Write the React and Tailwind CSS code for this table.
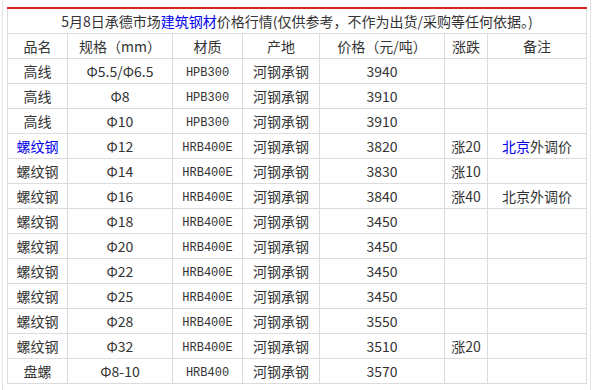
import React from "react"

const head = ['品名', '规格（mm）', '材质', '产地', '价格（元/吨）', '涨跌', '备注']

const rows = [
  ['高线', 'Φ5.5/Φ6.5', 'HPB300', '河钢承钢', '3940', '', ''],
  ['高线', 'Φ8', 'HPB300', '河钢承钢', '3910', '', ''],
  ['高线', 'Φ10', 'HPB300', '河钢承钢', '3910', '', ''],
  ['螺纹钢', 'Φ12', 'HRB400E', '河钢承钢', '3820', '涨20', '北京外调价', true],
  ['螺纹钢', 'Φ14', 'HRB400E', '河钢承钢', '3830', '涨10', ''],
  ['螺纹钢', 'Φ16', 'HRB400E', '河钢承钢', '3840', '涨40', '北京外调价'],
  ['螺纹钢', 'Φ18', 'HRB400E', '河钢承钢', '3450', '', ''],
  ['螺纹钢', 'Φ20', 'HRB400E', '河钢承钢', '3450', '', ''],
  ['螺纹钢', 'Φ22', 'HRB400E', '河钢承钢', '3450', '', ''],
  ['螺纹钢', 'Φ25', 'HRB400E', '河钢承钢', '3450', '', ''],
  ['螺纹钢', 'Φ28', 'HRB400E', '河钢承钢', '3550', '', ''],
  ['螺纹钢', 'Φ32', 'HRB400E', '河钢承钢', '3510', '涨20', ''],
  ['盘螺', 'Φ8-10', 'HRB400', '河钢承钢', '3570', '', ''],
]

function Cell({ children, first }) {
  return (
    <div className={`h-[25px] flex items-center justify-center border-b border-r border-[#dcdcdc] whitespace-nowrap ${first ? 'border-l' : ''}`}>
      {children}
    </div>
  )
}

export default function App() {
  return (
    <div className="ml-[2px] w-[589px] h-[390px] border-l border-r border-[#e3e3e3] bg-white pl-[4px] pt-[7px] text-[14px] text-[#333]"
      style={{ fontFamily: '"Noto Sans CJK SC", sans-serif' }}>
      <div className="w-[580px]">
        <div className="h-[2px] bg-[#d9281a]" />
        <div className="h-[25px] flex items-center justify-center border-l border-r border-b border-[#dcdcdc]">
          <span>5月8日承德市场<span className="text-[#0000ee]">建筑钢材</span>价格行情(仅供参考，不作为出货/采购等任何依据。)</span>
        </div>
        <div className="grid grid-cols-[61px_105px_70px_77px_125px_43px_99px]">
          {head.map((h, i) => <Cell key={h} first={i === 0}>{h}</Cell>)}
          {rows.map((r, ri) => (
            <React.Fragment key={ri}>
              <Cell first><span className={r[7] ? 'text-[#0000ee]' : ''}>{r[0]}</span></Cell>
              <Cell>{r[1]}</Cell>
              <Cell><span className="mt-[3px] font-['Liberation_Mono',monospace] text-[12px]">{r[2]}</span></Cell>
              <Cell>{r[3]}</Cell>
              <Cell>{r[4]}</Cell>
              <Cell>{r[5]}</Cell>
              <Cell>
                {r[7] ? <span><span className="text-[#0000ee]">北京</span>外调价</span> : r[6]}
              </Cell>
            </React.Fragment>
          ))}
        </div>
      </div>
    </div>
  )
}
